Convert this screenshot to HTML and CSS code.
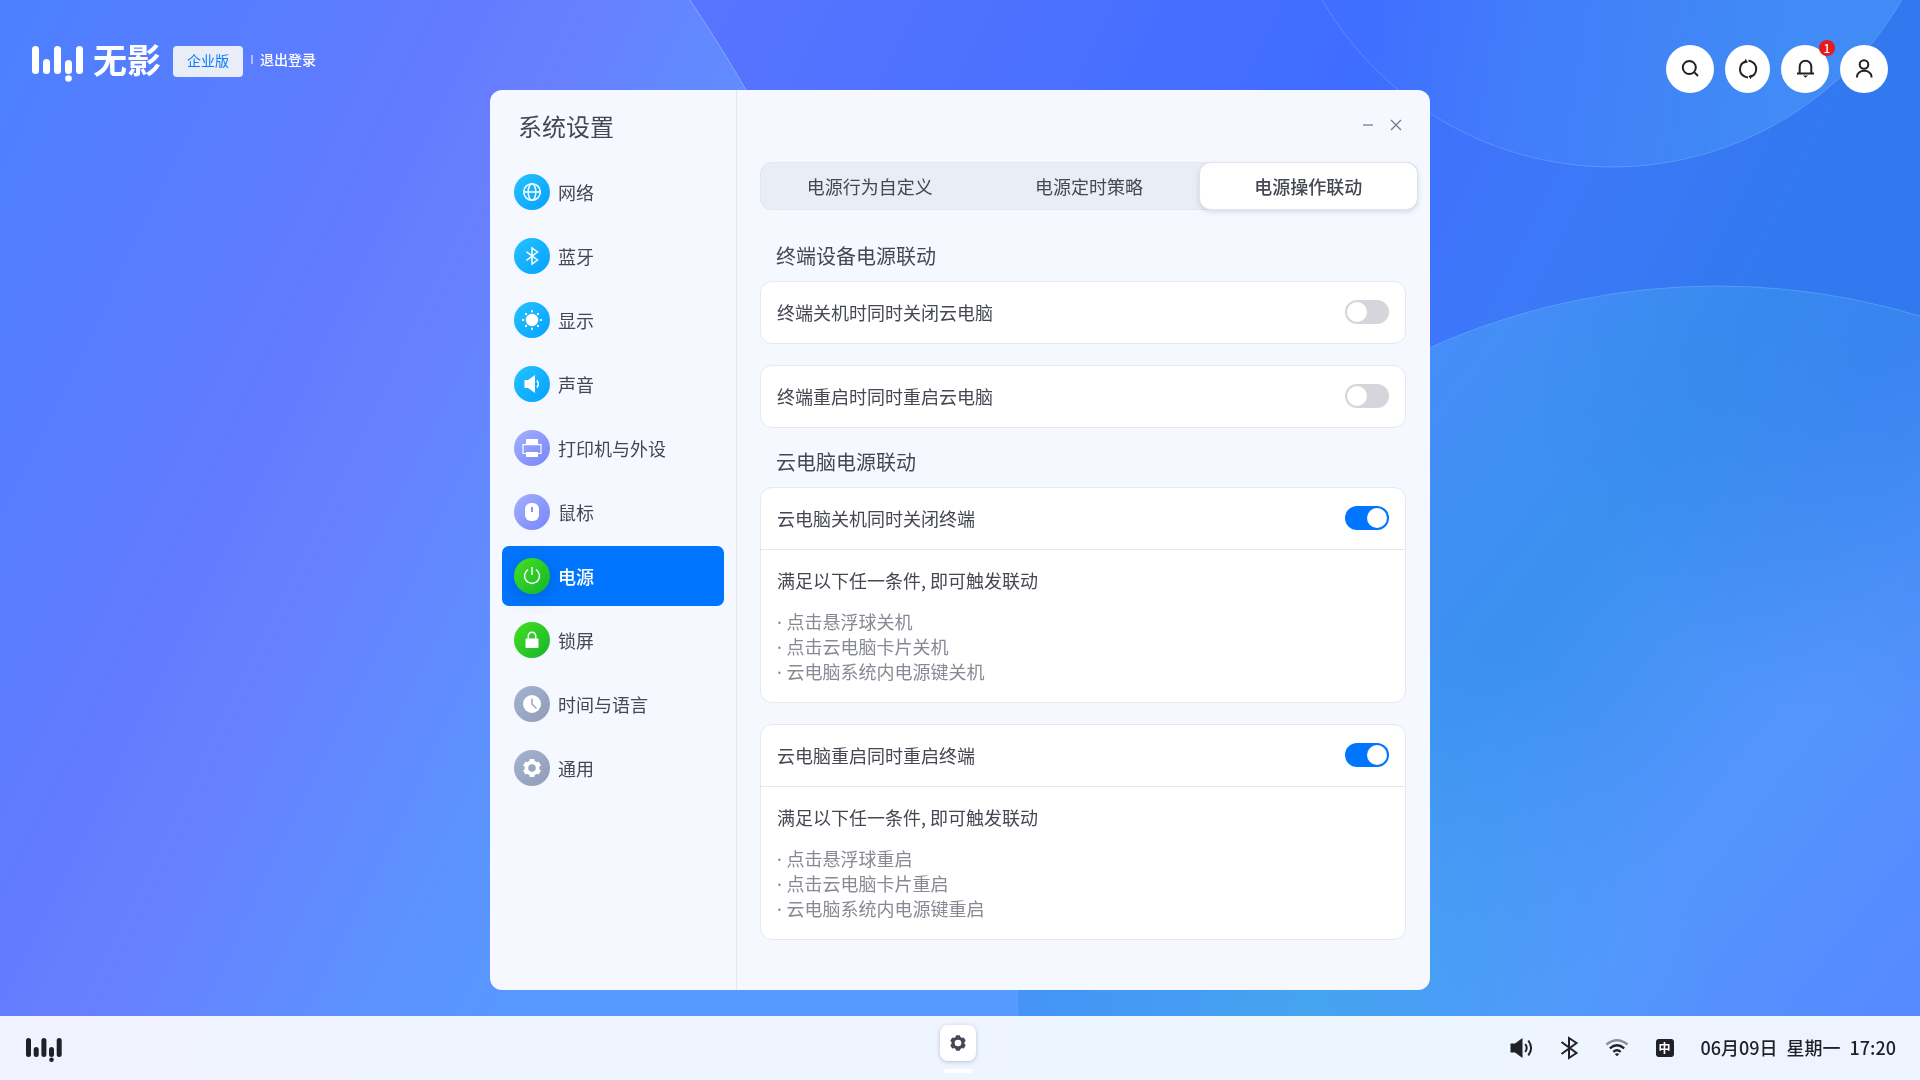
FILE: index.html
```html
<!DOCTYPE html>
<html lang="zh-CN">
<head>
<meta charset="utf-8">
<meta name="viewport" content="width=device-width, initial-scale=1">
<title>系统设置</title>
<link rel="stylesheet" href="styles.css">
</head>
<body>
<svg class="wallpaper" viewBox="0 0 1920 1080" preserveAspectRatio="xMidYMid slice" aria-hidden="true">
  <defs>
    <linearGradient id="wp-left" gradientUnits="userSpaceOnUse" x1="0" y1="0" x2="882" y2="432">
      <stop offset="0" stop-color="#4b80ff"/><stop offset=".42" stop-color="#627bff"/><stop offset=".53" stop-color="#687fff"/><stop offset=".82" stop-color="#5b94ff"/><stop offset="1" stop-color="#559aff"/>
    </linearGradient>
    <linearGradient id="wp-base" gradientUnits="userSpaceOnUse" x1="700" y1="0" x2="1700" y2="500">
      <stop offset="0" stop-color="#5874ff"/><stop offset=".55" stop-color="#3f6dff"/><stop offset=".76" stop-color="#3d78f8"/><stop offset="1" stop-color="#3079ee"/>
    </linearGradient>
    <linearGradient id="wp-top" gradientUnits="userSpaceOnUse" x1="1380" y1="0" x2="1780" y2="60">
      <stop offset="0" stop-color="#406fff"/><stop offset=".35" stop-color="#427cfa"/><stop offset="1" stop-color="#408bf5"/>
    </linearGradient>
    <linearGradient id="wp-low" gradientUnits="userSpaceOnUse" x1="1430" y1="340" x2="2046" y2="824">
      <stop offset="0" stop-color="#468df9"/><stop offset=".32" stop-color="#3a91ef"/><stop offset=".66" stop-color="#5495fd"/><stop offset="1" stop-color="#568aff"/>
    </linearGradient>
    <radialGradient id="wp-dark" gradientUnits="userSpaceOnUse" cx="1900" cy="340" r="380">
      <stop offset="0" stop-color="#3580ee" stop-opacity=".8"/><stop offset="1" stop-color="#3580ee" stop-opacity="0"/>
    </radialGradient>
    <radialGradient id="wp-cyan" gradientUnits="userSpaceOnUse" cx="1310" cy="1010" r="400">
      <stop offset="0" stop-color="#46a4f0"/><stop offset="1" stop-color="#4fa0fb" stop-opacity="0"/>
    </radialGradient>
  </defs>
  <rect width="1920" height="1080" fill="url(#wp-base)"/>
  <path d="M0 0H690Q722 48 746 90L1100 700V1080H0Z" fill="url(#wp-left)"/>
  <path d="M690 0Q722 48 746 90" fill="none" stroke="#9fb0ff" stroke-opacity=".7"/>
  <circle cx="1612" cy="-168" r="335" fill="url(#wp-top)" stroke="#7fb0ff" stroke-opacity=".45"/>
  <circle cx="1717" cy="986" r="700" fill="url(#wp-low)"/>
  <circle cx="1717" cy="986" r="700" fill="url(#wp-cyan)"/>
  <circle cx="1717" cy="986" r="700" fill="url(#wp-dark)" stroke="#7fb8ff" stroke-opacity=".4"/>
</svg>

<div class="desktop">
  <header class="topbar">
    <div class="brand">
      <svg class="brand-mark" viewBox="0 0 51 36" aria-hidden="true"><g fill="#fff"><rect width="7" height="28" rx="3.5"/><rect x="11" y="13" width="7" height="15" rx="3.5"/><rect x="22" width="7" height="28" rx="3.5"/><rect x="33" y="14" width="7" height="14" rx="3.5"/><rect x="44" width="7" height="28" rx="3.5"/><circle cx="36.500" cy="32.500" r="3.300"/></g></svg>
      <span class="brand-name">无影</span>
      <span class="edition">企业版</span>
      <a class="logout" href="#logout">退出登录</a>
    </div>
    <div class="actions">
      <button class="round" type="button" aria-label="搜索"><svg viewBox="0 0 24 24"><g class="line"><circle cx="11.300" cy="10.500" r="6.500"/><path d="M16.500 15.500l3.500 3.500"/></g></svg></button>
      <button class="round round-sync" type="button" aria-label="刷新"><svg viewBox="0 0 24 24"><g class="line"><path d="M10 4.200a8.200 8.200 0 0 0-1.500 15.200q1.800 1 3.500 1"/><path d="M14.500 19.800a8.200 8.200 0 0 0 1-15.200q-1.500-.9-3-.9"/></g><path d="M9.500 1.800l2.500 3.500-4 1.200zM14.500 22.200l-2-3.200 4-1.500z" fill="#1f2126"/></svg></button>
      <button class="round" type="button" aria-label="通知"><svg viewBox="0 0 24 24"><g class="line"><path d="M4 16.500h17M6.700 16.500V9.500a5.800 5.800 0 0 1 11.600 0v7"/></g><path d="M10 18.500h5l-2.500 2.200z" fill="#1f2126"/></svg><span class="badge">1</span></button>
      <button class="round" type="button" aria-label="账户"><svg viewBox="0 0 24 24"><g class="line"><circle cx="12" cy="7.500" r="4.300"/><path d="M5 20.500v-1a7 5.500 0 0 1 14.500 0v1"/></g></svg></button>
    </div>
  </header>

  <main class="window">
    <aside class="sidebar">
      <h1 class="window-title">系统设置</h1>
      <nav class="nav">
        <a class="nav-item" href="#network"><span class="dot sky"><svg viewBox="0 0 36 36"><g class="thin"><circle cx="18" cy="18" r="8.300"/><ellipse cx="18" cy="18" rx="3.800" ry="8.300"/><path d="M10 18h16"/></g></svg></span>网络</a>
        <a class="nav-item" href="#bluetooth"><span class="dot sky"><svg viewBox="0 0 36 36"><path class="thin" d="M12.500 13.800L23.500 22 18 26V10l5.500 4-11 8.300"/></svg></span>蓝牙</a>
        <a class="nav-item" href="#display"><span class="dot sky"><svg viewBox="0 0 36 36"><circle cx="18" cy="18" r="6.200" fill="#fff"/><g fill="#fff"><path d="M17 8.200h2v2h-2zM17 25.800h2v2h-2zM8.200 17h2v2h-2zM25.800 17h2v2h-2zM11 11h2v2h-2zM23 11h2v2h-2zM11 23h2v2h-2zM23 23h2v2h-2z"/></g></svg></span>显示</a>
        <a class="nav-item" href="#sound"><span class="dot sky"><svg viewBox="0 0 36 36"><path d="M10.500 14H14l7-5v18l-7-5h-3.500z" fill="#fff"/><path class="thin" d="M22.800 14.500q3 3.500 0 7"/></svg></span>声音</a>
        <a class="nav-item" href="#devices"><span class="dot violet"><svg viewBox="0 0 36 36"><path d="M12 9h12v5H12zM12 22h12v5H12z" fill="#fff"/><path d="M12 23.500H9V14.700h18v8.800h-3" fill="none" stroke="#fff" stroke-width="1.200"/></svg></span>打印机与外设</a>
        <a class="nav-item" href="#mouse"><span class="dot violet"><svg viewBox="0 0 36 36"><rect x="11" y="9" width="14" height="18" rx="6" fill="#fff"/><path d="M18 13v5" stroke="#8492ff" stroke-width="2"/></svg></span>鼠标</a>
        <a class="nav-item active" href="#power" aria-current="page"><span class="dot green"><svg viewBox="0 0 36 36"><g class="thin"><path d="M18 9v8M14 11.600a7.500 7.500 0 1 0 8 0"/></g></svg></span>电源</a>
        <a class="nav-item" href="#lock"><span class="dot green"><svg viewBox="0 0 36 36"><path class="thin" d="M14.300 17v-3a3.700 3.700 0 0 1 7.400 0v3"/><rect x="11.500" y="16.500" width="13" height="9.500" rx="1" fill="#fff"/></svg></span>锁屏</a>
        <a class="nav-item" href="#time"><span class="dot slate"><svg viewBox="0 0 36 36"><circle cx="18" cy="18" r="9" fill="#fff"/><path d="M18 12.500V18l4.500 4.500" fill="none" stroke="#9aa7c2" stroke-width="1.500"/></svg></span>时间与语言</a>
        <a class="nav-item" href="#general"><span class="dot slate"><svg viewBox="0 0 36 36"><g fill="#fff"><circle cx="18" cy="18" r="7.500"/><rect x="15.500" y="9" width="5" height="18" rx=".8"/><rect x="15.500" y="9" width="5" height="18" rx=".8" transform="rotate(60 18 18)"/><rect x="15.500" y="9" width="5" height="18" rx=".8" transform="rotate(120 18 18)"/></g><circle cx="18" cy="18" r="3.800" fill="#9aa7c2"/></svg></span>通用</a>
      </nav>
    </aside>

    <section class="content">
      <div class="window-controls">
        <button type="button" aria-label="最小化"><svg viewBox="0 0 12 12"><path d="M1 6h10"/></svg></button>
        <button type="button" aria-label="关闭"><svg viewBox="0 0 12 12"><path d="M1 1l10 10M11 1L1 11"/></svg></button>
      </div>
      <div class="tabs" role="tablist">
        <button class="tab" type="button" role="tab" aria-selected="false">电源行为自定义</button>
        <button class="tab" type="button" role="tab" aria-selected="false">电源定时策略</button>
        <button class="tab" type="button" role="tab" aria-selected="true">电源操作联动</button>
      </div>

      <h2 class="section-title">终端设备电源联动</h2>
      <div class="cards">
        <div class="card">
          <div class="row"><label for="t1">终端关机时同时关闭云电脑</label><input class="switch" id="t1" type="checkbox" role="switch"></div>
        </div>
        <div class="card">
          <div class="row"><label for="t2">终端重启时同时重启云电脑</label><input class="switch" id="t2" type="checkbox" role="switch"></div>
        </div>
      </div>

      <h2 class="section-title">云电脑电源联动</h2>
      <div class="cards">
        <div class="card">
          <div class="row"><label for="t3">云电脑关机同时关闭终端</label><input class="switch" id="t3" type="checkbox" role="switch" checked></div>
          <div class="detail">
            <p>满足以下任一条件, 即可触发联动</p>
            <ul><li>点击悬浮球关机</li><li>点击云电脑卡片关机</li><li>云电脑系统内电源键关机</li></ul>
          </div>
        </div>
        <div class="card">
          <div class="row"><label for="t4">云电脑重启同时重启终端</label><input class="switch" id="t4" type="checkbox" role="switch" checked></div>
          <div class="detail">
            <p>满足以下任一条件, 即可触发联动</p>
            <ul><li>点击悬浮球重启</li><li>点击云电脑卡片重启</li><li>云电脑系统内电源键重启</li></ul>
          </div>
        </div>
      </div>
    </section>
  </main>

  <footer class="taskbar">
    <button class="start" type="button" aria-label="开始"><svg viewBox="0 0 36 24"><g fill="#1f2126"><rect width="5" height="19" rx="2.500"/><rect x="7.700" y="9" width="5" height="10" rx="2.500"/><rect x="15.400" width="5" height="19" rx="2.500"/><rect x="23" y="9" width="5" height="10" rx="2.500"/><rect x="30.700" width="5" height="19" rx="2.500"/><circle cx="25.500" cy="21.700" r="2.300"/></g></svg></button>
    <div class="running">
      <button class="app" type="button" aria-label="系统设置"><svg viewBox="0 0 36 36"><g fill="#454852"><circle cx="18" cy="18" r="6.500"/><rect x="15.800" y="10.200" width="4.400" height="15.600" rx=".8"/><rect x="15.800" y="10.200" width="4.400" height="15.600" rx=".8" transform="rotate(60 18 18)"/><rect x="15.800" y="10.200" width="4.400" height="15.600" rx=".8" transform="rotate(120 18 18)"/></g><circle cx="18" cy="18" r="3.300" fill="#fff"/></svg></button>
    </div>
    <div class="tray">
      <button type="button" aria-label="音量"><svg viewBox="0 0 24 24"><path d="M1.500 7.500H6L13.500 2v20L6 16.500H1.500z" fill="#1f2126"/><g class="line"><path d="M16.200 8q3 4 0 8M19.300 4.500q5.600 7.500 0 15"/></g></svg></button>
      <button type="button" aria-label="蓝牙"><svg viewBox="0 0 24 24"><path class="line" d="M4.500 6l15 11-7.500 5V2l7.500 5-15 11"/></svg></button>
      <button type="button" aria-label="无线网络"><svg viewBox="0 0 24 24"><path d="M1.500 8.500q10.500-8.500 21 0" fill="none" stroke="#8b8d99" stroke-width="2.300"/><g fill="none" stroke="#1f2126" stroke-width="2.300"><path d="M4.800 12.300q7.200-6 14.400 0M8.300 15.800q3.700-3 7.400 0"/></g><path d="M9.700 18q2.300-1.300 4.600 0L12 20.200z" fill="#1f2126"/></svg></button>
      <button class="ime" type="button" aria-label="输入法"><span>中</span></button>
      <time class="clock"><span>06月09日</span><span>星期一</span><span>17:20</span></time>
    </div>
  </footer>
</div>
</body>
</html>
```
FILE: styles.css
```css
:root {
  --ink: #454852;
  --dark: #1f2126;
  --muted: #878993;
  --blue: #0075ff;
  --line: #e6e8ee;
}

* { box-sizing: border-box; }

body {
  margin: 0;
  color: var(--ink);
  background: #5078fc;
  font: 400 18px/24px "Noto Sans CJK SC", "Noto Sans", sans-serif;
}

h1, h2, p, ul { margin: 0; padding: 0; font-weight: 400; }
ul { list-style: none; }
a { color: inherit; text-decoration: none; }
button { padding: 0; border: 0; background: none; color: inherit; font: inherit; cursor: pointer; }
svg { display: block; }

.line { fill: none; stroke: var(--dark); stroke-width: 2; }
.thin { fill: none; stroke: #fff; stroke-width: 1.5; }

.wallpaper { position: fixed; inset: 0; width: 100%; height: 100%; }

/* Bars and window share one grid cell so the window stays centred on screen */
.desktop { position: relative; display: grid; min-height: 100vh; }
.desktop > * { grid-area: 1 / 1; }

.topbar {
  align-self: start;
  display: flex;
  justify-content: space-between;
  padding: 45px 32px 0;
  color: #fff;
}
.brand { display: flex; align-items: flex-start; }
.brand-mark { width: 51px; height: 36px; margin-top: 1px; }
.brand-name { margin: 0 12px 0 10px; font-size: 34px; line-height: 28px; font-weight: 700; }
.edition {
  margin: 1px 8px 0 0;
  padding: 0 14px 2px;
  border-radius: 4px;
  background: #e8edf7;
  color: #0a7cff;
  font-size: 14px;
  line-height: 29px;
}
.logout { display: flex; align-items: center; gap: 7px; font-size: 14px; line-height: 28px; font-weight: 500; }
.logout::before { content: ""; width: 2px; height: 9px; background: rgba(255, 255, 255, .5); }

.actions { display: flex; gap: 11px; }
.round {
  position: relative;
  display: grid;
  place-items: center;
  width: 48px;
  height: 48px;
  border-radius: 50%;
  background: #fff;
}
.round-sync { width: 45px; }
.round svg { width: 24px; height: 24px; }
.badge {
  position: absolute;
  top: -5px;
  right: -6px;
  width: 16px;
  height: 16px;
  border-radius: 50%;
  background: #e61c1c;
  color: #fff;
  font-size: 12px;
  line-height: 16px;
  font-weight: 500;
}

.window {
  place-self: center;
  display: flex;
  width: min(940px, 94vw);
  margin: 90px 0;
  border-radius: 12px;
  background: #f5f8ff;
}
.sidebar { width: 247px; padding: 0 12px; border-right: 1px solid #e3e6ec; }
.window-title { padding: 0 16px; font-size: 24px; line-height: 72px; }
.nav { display: grid; gap: 4px; }
.nav-item { display: flex; align-items: center; gap: 8px; height: 60px; padding: 0 12px; border-radius: 7px; }
.nav-item.active { background: var(--blue); color: #fff; font-weight: 500; }
.dot { width: 36px; height: 36px; border-radius: 50%; }
.active .dot { box-shadow: 0 4px 20px rgba(0, 30, 90, .22); }
.sky { background: linear-gradient(135deg, #27c2ff, #03a1ff); }
.violet { background: linear-gradient(135deg, #a5b0ff, #7586fa); }
.green { background: linear-gradient(135deg, #45e020, #14b52c); }
.slate { background: linear-gradient(135deg, #a3b3d3, #929db5); }

.content { flex: 1; padding: 0 24px 50px 23px; }
.window-controls { display: flex; justify-content: flex-end; align-items: center; gap: 16px; height: 72px; padding: 0 4px 3px; }
.window-controls svg { width: 12px; height: 12px; fill: none; stroke: #777a84; stroke-width: 1.3; }

.tabs {
  display: grid;
  grid-template-columns: repeat(3, 1fr);
  height: 48px;
  margin: 0 -12px 31px 0;
  border-radius: 12px;
  background: #e9edf5;
  box-shadow: inset 0 0 0 1px #e2e6ed;
}
.tab[aria-selected="true"] {
  border: 1px solid #e2e4ea;
  border-radius: 12px;
  background: #fff;
  box-shadow: 0 2px 5px rgba(30, 40, 80, .14);
  font-weight: 500;
}

.section-title { margin-bottom: 10px; padding: 0 16px; font-size: 20px; line-height: 30px; }
.cards { display: grid; gap: 21px; margin-bottom: 19px; }
.cards:last-child { margin-bottom: 0; }
.card { border: 1px solid var(--line); border-radius: 12px; background: #fff; }
.row { display: flex; align-items: center; justify-content: space-between; height: 61px; padding: 0 16px 1px; }
.detail { padding: 18px 16px; border-top: 1px solid var(--line); line-height: 25px; }
.detail ul { margin-top: 16px; color: var(--muted); }
.detail li::before { content: "· "; font-family: "Noto Sans", sans-serif; line-height: 1; }

.switch {
  appearance: none;
  width: 44px;
  height: 24px;
  margin: 0;
  padding: 2px;
  border-radius: 12px;
  background: #d5d6dc;
  cursor: pointer;
}
.switch::before { content: ""; display: block; width: 20px; height: 20px; border-radius: 50%; background: #fff; }
.switch:checked { background: var(--blue); }
.switch:checked::before { margin-left: auto; }

.taskbar {
  align-self: end;
  display: grid;
  grid-template-columns: 1fr auto 1fr;
  align-items: center;
  height: 64px;
  padding: 0 24px 0 20px;
  background: rgba(255, 255, 255, .9);
  color: var(--dark);
}
.start { justify-self: start; padding: 8px 6px 4px; }
.start svg { width: 36px; height: 24px; }
.running { display: grid; justify-items: center; gap: 8px; padding-top: 1px; }
.running::after { content: ""; width: 28px; height: 4px; border-radius: 2px; background: #fff; }
.app { border-radius: 8px; background: #fff; box-shadow: 0 1px 4px rgba(30, 40, 80, .25); }
.app svg { width: 36px; height: 36px; }
.tray { justify-self: end; display: flex; align-items: center; gap: 24px; font-weight: 500; }
.tray svg { width: 24px; height: 24px; }
.ime { display: grid; place-items: center; width: 24px; }
.ime span { width: 18px; height: 18px; border-radius: 3px; background: var(--dark); color: #fff; font-size: 12px; line-height: 18px; font-weight: 700; }
.clock { display: flex; gap: 9px; padding-bottom: 2px; }
```
